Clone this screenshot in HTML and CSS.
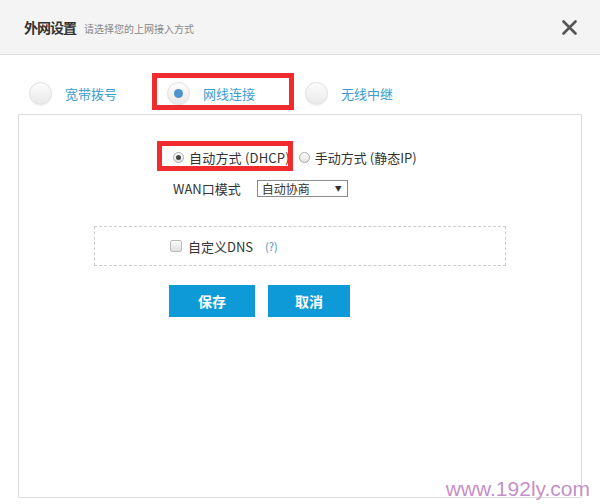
FILE: index.html
```html
<!DOCTYPE html>
<html lang="zh-CN">
<head>
    <meta charset="UTF-8">
    <meta name="viewport" content="width=device-width, initial-scale=1.0">
    <title>外网设置</title>
    <link rel="stylesheet" href="styles.css">
</head>
<body>
    <div id="dialog">
        <div class="head">
            <span class="title">外网设置</span>
            <span class="sub">请选择您的上网接入方式</span>
            <span class="close">
                <svg width="15" height="15" viewBox="0 0 15 15">
                    <path d="M1.5 1.5 L13.5 13.5 M13.5 1.5 L1.5 13.5" stroke="#555" stroke-width="2.6" stroke-linecap="round"/>
                </svg>
            </span>
        </div>
        <div class="tabs">
            <div class="tab"><span class="ball"></span><span>宽带拨号</span></div>
            <div class="tab mark"><span class="ball on"></span><span>网线连接</span></div>
            <div class="tab"><span class="ball"></span><span>无线中继</span></div>
        </div>
        <div class="panel">
            <div class="row modes">
                <span class="opt mark"><i class="dot on"></i>自动方式 (DHCP)</span>
                <span class="opt"><i class="dot"></i>手动方式 (静态IP)</span>
            </div>
            <div class="row">
                <span>WAN口模式</span>
                <span class="select">自动协商<b>▼</b></span>
            </div>
            <div class="dns">
                <i class="box"></i><span>自定义DNS</span><a class="help">(?)</a>
            </div>
            <div class="btns">
                <button class="btn save">保存</button>
                <button class="btn">取消</button>
            </div>
        </div>
        <div class="wm">www.192ly.com</div>
    </div>
</body>
</html>
```
FILE: styles.css
```css
body {
    margin: 0;
    background: #fff;
    font-family: "Noto Sans CJK SC", "Liberation Sans", sans-serif;
}
#dialog {
    position: relative;
    width: 600px;
    height: 504px;
    overflow: hidden;
}
.head {
    display: flex;
    align-items: center;
    height: 54px;
    padding: 0 23px 0 24px;
    background: #f4f4f4;
    border-bottom: 1px solid #ddd;
}
.title {
    font-size: 14px;
    font-weight: bold;
    color: #333;
    letter-spacing: -1px;
}
.sub {
    margin: 2px 0 0 8px;
    font-size: 10px;
    color: #888;
}
.close {
    display: flex;
    margin-left: auto;
}
.tabs {
    display: flex;
    height: 32px;
    padding: 27px 0 0 29px;
}
.tab {
    position: relative;
    display: flex;
    align-items: center;
    gap: 13px;
    height: 23px;
    margin-right: 50px;
    font-size: 13px;
    color: #3c9bd2;
}
/* red highlight frame around the chosen option */
.mark::before {
    content: "";
    position: absolute;
    border: 5px solid #ef2b2d;
}
.tab.mark::before {
    left: -15px;
    right: -39px;
    top: -9px;
    bottom: -5px;
}
.ball {
    position: relative;
    width: 21px;
    height: 21px;
    border: 1px solid #e0e0e0;
    border-radius: 50%;
    background: linear-gradient(#fdfdfd, #e9e9e9);
    box-shadow: 0 1px 1px rgba(0, 0, 0, 0.05);
}
.ball.on::after {
    content: "";
    position: absolute;
    left: 6px;
    top: 6px;
    width: 9px;
    height: 9px;
    border-radius: 50%;
    background: #4b94cc;
}
.panel {
    margin: 0 18px;
    border: 1px solid #ddd;
    padding-top: 32px;
    box-sizing: border-box;
    height: 384px;
}
.row {
    display: flex;
    align-items: center;
    height: 20px;
    margin-left: 154px;
    font-size: 13px;
    color: #333;
}
.row + .row {
    margin-top: 11px;
}
.opt {
    position: relative;
    display: flex;
    align-items: center;
}
.opt.mark {
    margin-right: 9px;
    letter-spacing: 0.2px;
}
.opt.mark::before {
    left: -16px;
    right: -3px;
    top: -7px;
    bottom: -4px;
}
.dot {
    position: relative;
    width: 9px;
    height: 9px;
    margin-right: 5px;
    border: 1px solid #aaa;
    border-radius: 50%;
    background: linear-gradient(#fff, #e2e2e2);
}
.dot.on::after {
    content: "";
    position: absolute;
    left: 2px;
    top: 2px;
    width: 5px;
    height: 5px;
    border-radius: 50%;
    background: #444;
}
.select {
    display: flex;
    justify-content: space-between;
    align-items: center;
    width: 91px;
    height: 17px;
    margin-left: 16px;
    padding: 0 5px 0 4px;
    box-sizing: border-box;
    border: 1px solid #8a8a8a;
    font-size: 12px;
}
.select b {
    font-size: 7px;
    font-weight: normal;
}
.dns {
    display: flex;
    align-items: center;
    width: 412px;
    height: 40px;
    margin: 28px 0 0 75px;
    padding-left: 75px;
    box-sizing: border-box;
    border: 1px dashed #ccc;
    font-size: 13px;
    color: #333;
}
.box {
    width: 10px;
    height: 10px;
    margin-right: 6px;
    border: 1px solid #bbb;
    border-radius: 2px;
    background: linear-gradient(#fafafa, #e0e0e0);
}
.help {
    margin-left: 12px;
    font-size: 11px;
    color: #4a90c0;
}
.btns {
    display: flex;
    gap: 13px;
    margin: 19px 0 0 150px;
}
.btn {
    width: 82px;
    height: 32px;
    border: none;
    background: #0e9ad6;
    color: #fff;
    font: bold 14px "Noto Sans CJK SC", sans-serif;
}
.btn.save {
    width: 86px;
}
.wm {
    position: absolute;
    right: 10px;
    bottom: 3px;
    font: 21px "Liberation Sans", sans-serif;
    color: #c690c8;
}
```
